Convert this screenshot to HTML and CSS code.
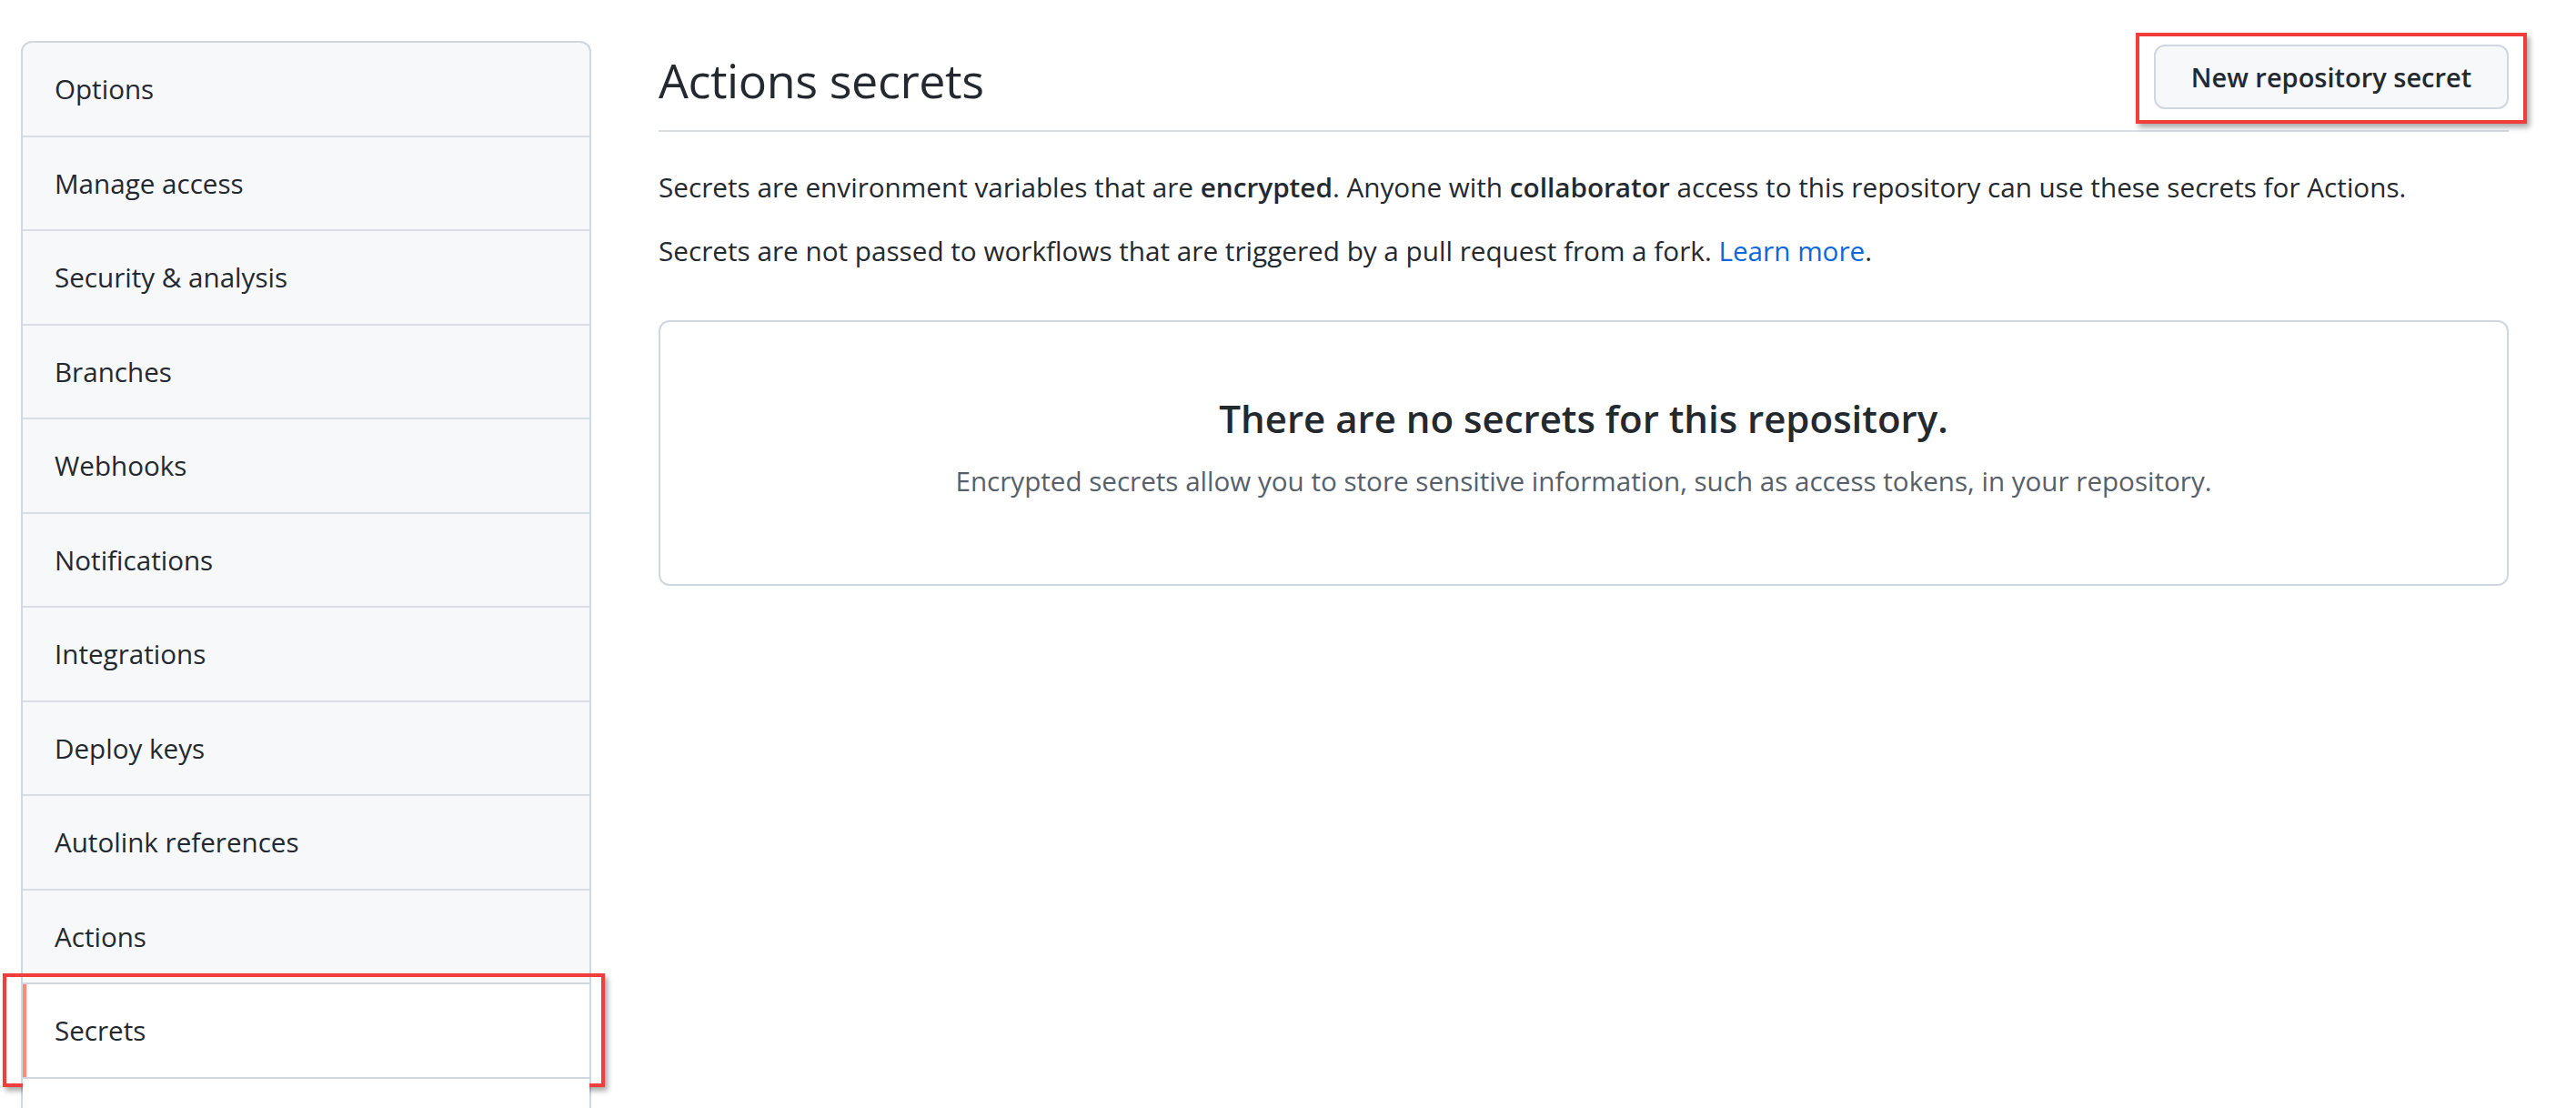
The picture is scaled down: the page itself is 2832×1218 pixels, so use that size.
FILE: index.html
```html
<!DOCTYPE html>
<html lang="en">
<head>
<meta charset="utf-8">
<title>Actions secrets</title>
<link rel="stylesheet" href="styles.css">
</head>
<body>
<div class="layout">
  <nav class="menu">
    <a class="menu-item">Options</a>
    <a class="menu-item">Manage access</a>
    <a class="menu-item">Security &amp; analysis</a>
    <a class="menu-item">Branches</a>
    <a class="menu-item">Webhooks</a>
    <a class="menu-item">Notifications</a>
    <a class="menu-item">Integrations</a>
    <a class="menu-item">Deploy keys</a>
    <a class="menu-item">Autolink references</a>
    <a class="menu-item">Actions</a>
    <a class="menu-item selected">Secrets<span class="annot annot-menu"></span></a>
    <a class="menu-item blank"></a>
  </nav>
  <main class="content">
    <div class="subhead">
      <h2 class="subhead-heading">Actions secrets</h2>
      <div class="btn-wrap">
        <button class="btn">New repository secret</button>
        <span class="annot annot-btn"></span>
      </div>
    </div>
    <p class="para">Secrets are environment variables that are <strong>encrypted</strong>. Anyone with <strong>collaborator</strong> access to this repository can use these secrets for Actions.</p>
    <p class="para">Secrets are not passed to workflows that are triggered by a pull request from a fork. <a class="link">Learn more</a>.</p>
    <div class="blankslate">
      <h3 class="blank-title">There are no secrets for this repository.</h3>
      <p class="blank-text">Encrypted secrets allow you to store sensitive information, such as access tokens, in your repository.</p>
    </div>
  </main>
</div>
</body>
</html>
```

FILE: styles.css
```css
html, body {
  margin: 0;
  padding: 0;
  background: #ffffff;
}
body {
  font-family: "Open Sans", "Noto Sans", sans-serif;
  color: #24292f;
  width: 2832px;
  height: 1218px;
  overflow: hidden;
}
.layout {
  display: flex;
  align-items: flex-start;
  padding: 45px 0 0 23px;
}
.menu {
  width: 627px;
  box-sizing: border-box;
  border: 2px solid #d0d7de;
  border-radius: 12px 12px 0 0;
  background: #f6f8fa;
  display: flex;
  flex-direction: column;
  flex-shrink: 0;
}
.menu-item {
  position: relative;
  display: flex;
  align-items: center;
  height: 101.5px;
  padding-left: 35px;
  border-bottom: 2px solid #d8dee4;
  font-size: 29.6px;
  color: #24292f;
}
.menu-item:first-child {
  border-top-left-radius: 10px;
  border-top-right-radius: 10px;
}
.menu-item.selected {
  background: #ffffff;
  border-top: 2px solid #d0d7de;
  margin-top: -2px;
  border-bottom-color: #d0d7de;
  box-shadow: inset 4px 0 0 #fd8c73;
}
.menu-item.blank {
  background: #ffffff;
  border-bottom: none;
}
.content {
  margin-left: 74px;
  width: 2034px;
  flex-shrink: 0;
}
.subhead {
  display: flex;
  justify-content: space-between;
  align-items: flex-start;
  height: 98px;
  border-bottom: 2px solid #d8dee4;
}
.subhead-heading {
  margin: 0;
  font-size: 52px;
  line-height: 80px;
  font-weight: 400;
  letter-spacing: -0.4px;
  color: #24292f;
  margin-top: 3px;
}
.btn-wrap {
  position: relative;
  margin-top: 4px;
}
.btn {
  display: block;
  width: 390px;
  height: 71px;
  box-sizing: border-box;
  border: 2px solid #d0d7de;
  border-radius: 12px;
  background: #f6f8fa;
  font-family: "Open Sans", "Noto Sans", sans-serif;
  font-size: 29px;
  font-weight: 600;
  color: #24292f;
  padding: 0;
}
.annot {
  position: absolute;
  border: 4px solid #f23d3d;
  box-shadow: 3px 4px 6px rgba(0, 0, 0, 0.35);
  pointer-events: none;
}
.annot-btn {
  left: -20px;
  top: -13px;
  width: 422px;
  height: 92px;
}
.annot-menu {
  left: -22px;
  top: -12px;
  width: 654px;
  height: 117px;
}
.para {
  margin: 0;
  font-size: 29.7px;
  line-height: 70px;
}
.para:first-of-type {
  margin-top: 26px;
}
.para strong {
  font-weight: 600;
}
.link {
  color: #0969da;
}
.blankslate {
  margin-top: 41px;
  height: 292px;
  box-sizing: border-box;
  border: 2px solid #d0d7de;
  border-radius: 12px;
  padding-top: 76px;
  text-align: center;
}
.blank-title {
  margin: 0;
  font-size: 42px;
  font-weight: 600;
  color: #24292f;
  line-height: 60px;
}
.blank-text {
  margin: 17px 0 0;
  font-size: 29.6px;
  color: #57606a;
  line-height: 44px;
}
```
